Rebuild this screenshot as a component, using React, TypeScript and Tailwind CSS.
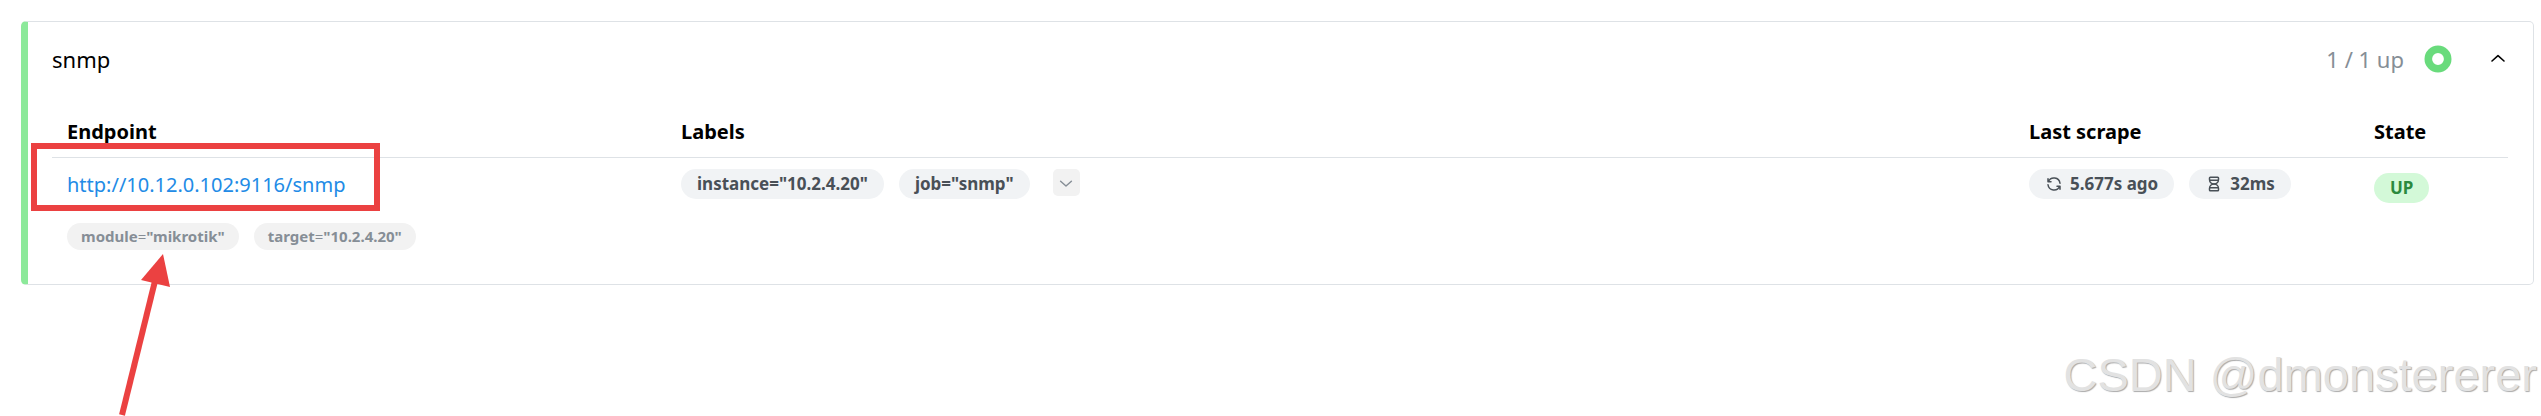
import React from 'react';
import { TbHourglass, TbRefresh } from 'react-icons/tb';

interface Label {
  name: string;
  value: string;
}

interface Target {
  url: string;
  params: Label[];
  labels: Label[];
  lastScrape: string;
  duration: string;
  state: string;
}

const targets: Target[] = [
  {
    url: 'http://10.12.0.102:9116/snmp',
    params: [
      { name: 'module', value: 'mikrotik' },
      { name: 'target', value: '10.2.4.20' },
    ],
    labels: [
      { name: 'instance', value: '10.2.4.20' },
      { name: 'job', value: 'snmp' },
    ],
    lastScrape: '5.677s ago',
    duration: '32ms',
    state: 'UP',
  },
];

export default function App() {
  return (
    <div className="relative min-h-screen overflow-hidden bg-white pt-[21px] pr-[7px] pl-[21px] font-['Noto_Sans',sans-serif] text-black">
      <section className="rounded-[5px] border border-l-[7px] border-[#dee2e6] border-l-[#8ce99a] pr-[25px] pb-[34px] pl-6">
        <PoolHeader name="snmp" up={1} total={1} />
        <TargetTable />
      </section>

      {/* Annotations */}
      <div className="pointer-events-none absolute top-[143px] left-[31px] h-[68px] w-[349px] border-6 border-[#eb4141]" />
      <svg className="pointer-events-none absolute top-[254px] left-[116px]" width="58" height="162" viewBox="0 0 58 162">
        <path d="M6 161L39 27" stroke="#eb4141" strokeWidth="6" />
        <path d="M47 0L25 26L54 33Z" fill="#eb4141" />
      </svg>
      <div className="pointer-events-none absolute top-[345px] right-[4px] font-['Liberation_Sans',Arial,sans-serif] text-[47px] leading-[60px] whitespace-nowrap text-[#e2e2e2] [text-shadow:1px_1px_1px_#aaa]">
        CSDN @dmonstererer
      </div>
    </div>
  );
}

function PoolHeader({ name, up, total }: { name: string; up: number; total: number }) {
  return (
    <div className="mb-0.5 flex h-[74px] items-center text-[22px] leading-8">
      <span>{name}</span>
      <span className="ml-auto text-[#868e96]">
        {up} / {total} up
      </span>
      <svg className="ml-5" width="28" height="28" viewBox="0 0 28 28">
        <circle cx="14" cy="14" r="9.7" fill="none" stroke="#69db7c" strokeWidth="7.6" />
      </svg>
      <button type="button" aria-label="Collapse" className="ml-9">
        <Chevron className="size-5 rotate-180" />
      </button>
    </div>
  );
}

function TargetTable() {
  return (
    <table className="w-full table-fixed border-collapse text-left">
      <thead>
        <tr className="border-b border-[#dee2e6] text-[20px] leading-7">
          <th className="w-1/4 px-[15px] pt-5 pb-[11px] font-bold">Endpoint</th>
          <th className="px-[15px] pt-5 pb-[11px] font-bold">Labels</th>
          <th className="w-[345px] px-[15px] pt-5 pb-[11px] font-bold">Last scrape</th>
          <th className="w-[149px] px-[15px] pt-5 pb-[11px] font-bold">State</th>
        </tr>
      </thead>
      <tbody>
        {targets.map((target) => (
          <tr key={target.url} className="align-top">
            <td className="px-[15px] pt-[11px]">
              <a href={target.url} className="block text-[20px] leading-8 text-[#228be6]">
                {target.url}
              </a>
              <div className="mt-[22px] flex gap-[15px]">
                {target.params.map((p) => (
                  <span key={p.name} className="flex h-[27px] items-center rounded-full bg-[#f2f2f2] px-[14px] text-[15px] font-bold text-[#868e96]">
                    {p.name}
                    <span className="font-normal">=</span>"{p.value}"
                  </span>
                ))}
              </div>
            </td>
            <td className="px-[15px] pt-[11px]">
              <div className="flex gap-[15px]">
                {target.labels.map((l) => (
                  <Badge key={l.name}>{`${l.name}="${l.value}"`}</Badge>
                ))}
                <button type="button" aria-label="Show more labels" className="ml-2 flex size-[27px] items-center justify-center rounded-[5px] bg-[#f2f2f2] text-[#868e96]">
                  <Chevron className="size-[18px]" />
                </button>
              </div>
            </td>
            <td className="px-[15px] pt-[11px]">
              <div className="flex gap-[15px]">
                <Badge>
                  <TbRefresh className="mr-[7px] size-[18px]" />
                  {target.lastScrape}
                </Badge>
                <Badge>
                  <TbHourglass className="mr-[7px] size-[18px]" />
                  {target.duration}
                </Badge>
              </div>
            </td>
            <td className="px-[15px] pt-[15px]">
              <Badge up>{target.state}</Badge>
            </td>
          </tr>
        ))}
      </tbody>
    </table>
  );
}

function Badge({ up = false, children }: { up?: boolean; children: React.ReactNode }) {
  return (
    <span
      className={`flex h-[30px] w-fit items-center rounded-full px-4 text-[17px] font-bold whitespace-nowrap ${
        up ? 'bg-[#d3f9d8] text-[#2b8a3e]' : 'bg-[#f1f3f5] text-[#495057]'
      }`}
    >
      {children}
    </span>
  );
}

function Chevron({ className }: { className: string }) {
  return (
    <svg className={className} viewBox="0 0 15 15" fill="none" stroke="currentColor" strokeWidth="1.2" strokeLinecap="round" strokeLinejoin="round">
      <path d="M3 6L7.5 10L12 6" />
    </svg>
  );
}
